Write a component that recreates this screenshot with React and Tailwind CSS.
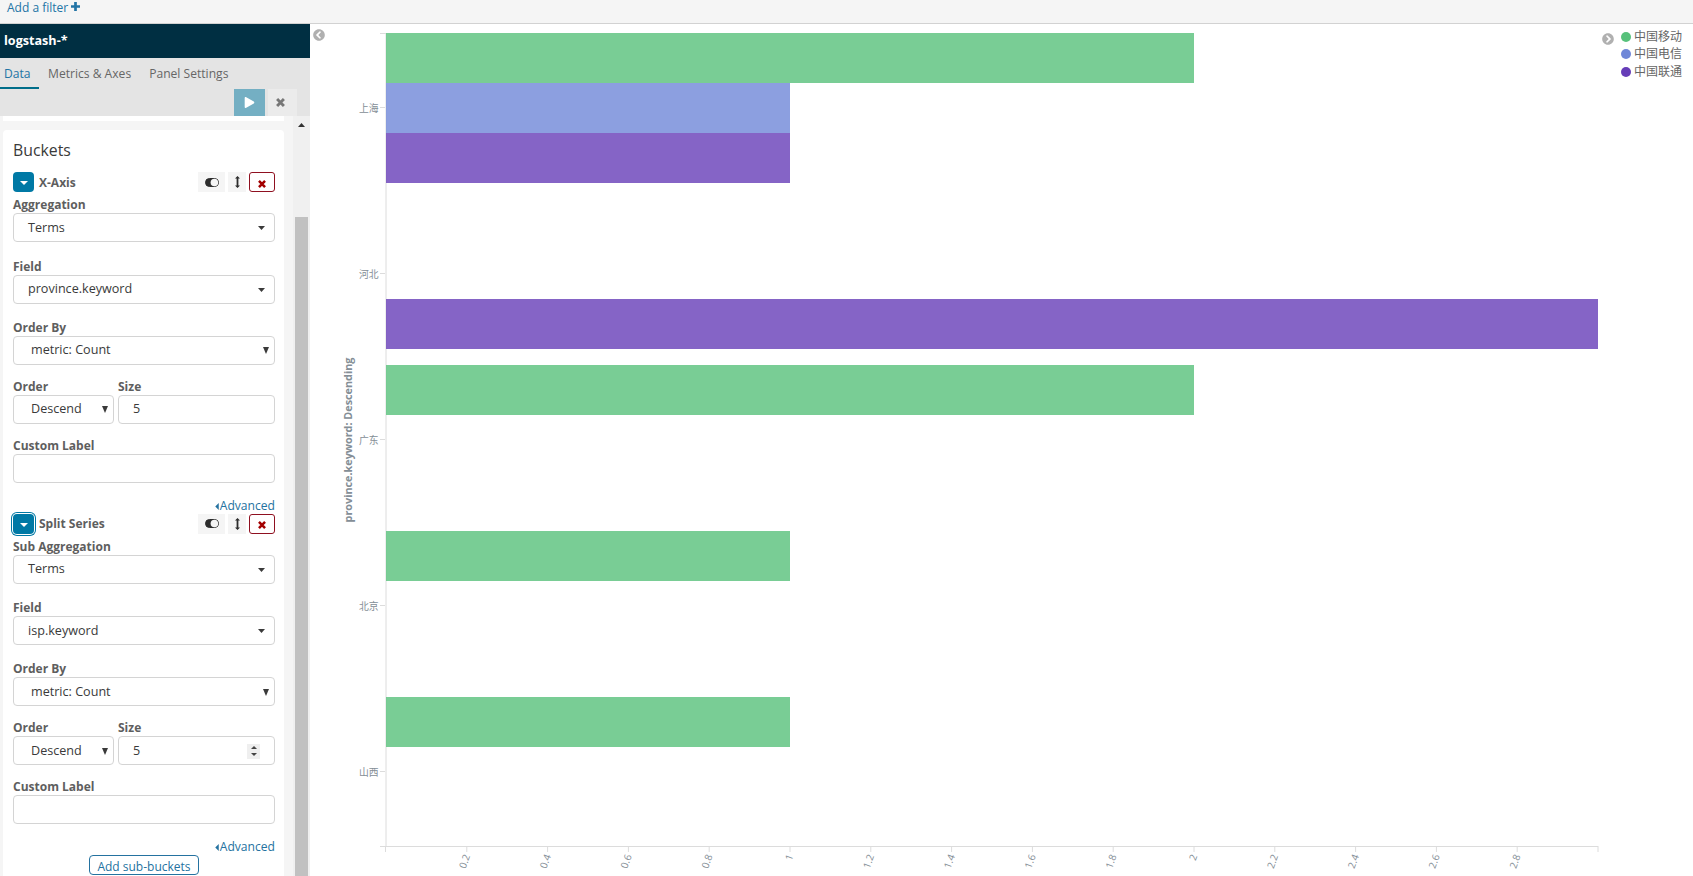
import { FaPlay, FaChevronCircleLeft, FaChevronCircleRight } from "react-icons/fa";

const UNIT = 404;

const bars = [
  { y: 9, value: 2, color: "#57c17b" },
  { y: 59, value: 1, color: "#6f87d8" },
  { y: 109, value: 1, color: "#663db8" },
  { y: 275, value: 3, color: "#663db8" },
  { y: 341, value: 2, color: "#57c17b" },
  { y: 507, value: 1, color: "#57c17b" },
  { y: 673, value: 1, color: "#57c17b" },
];

const provinces = ["上海", "河北", "广东", "北京", "山西"];
const ticks = ["0.2", "0.4", "0.6", "0.8", "1", "1.2", "1.4", "1.6", "1.8", "2", "2.2", "2.4", "2.6", "2.8"];

const legend = [
  { label: "中国移动", dot: "bg-[#57c17b]" },
  { label: "中国电信", dot: "bg-[#6f87d8]" },
  { label: "中国联通", dot: "bg-[#663db8]" },
];

function Triangle({ className }) {
  return (
    <svg viewBox="0 0 8 5" preserveAspectRatio="none" className={className} fill="currentColor">
      <path d="M0 0h8L4 5z" />
    </svg>
  );
}

function Cross({ className }) {
  return (
    <svg viewBox="0 0 10 10" className={className} stroke="currentColor" strokeWidth="3.2">
      <path d="M1.2 1.2l7.6 7.6M8.8 1.2L1.2 8.8" />
    </svg>
  );
}

function Field({ label, className = "", children }) {
  return (
    <div className={className}>
      <div className="h-[18px] text-[12px] leading-[20px] font-bold text-[#5e5e5e] whitespace-nowrap">{label}</div>
      {children}
    </div>
  );
}

function Box({ children, className = "" }) {
  return (
    <div className={`flex h-[29px] items-center justify-between rounded-[4px] border border-[#d4d4d4] bg-white pt-px text-[12.6px] text-[#3a3a3a] ${className}`}>
      {children}
    </div>
  );
}

function BucketHeader({ title, focused }) {
  return (
    <div className="flex h-[20px] items-center">
      <button className={`flex h-[20px] w-[21px] items-center justify-center rounded-[4px] bg-[#0079a5] text-white ${focused ? "ring-1 ring-[#0079a5] ring-offset-1" : ""}`}>
        <Triangle className="mt-0.5 h-[4px] w-[8px]" />
      </button>
      <span className="mt-px ml-[5px] text-[12px] font-bold text-[#5e5e5e]">{title}</span>
      <div className="ml-auto flex h-[20px]">
        <span className="flex w-[27px] items-center justify-center bg-[#f5f5f5]">
          <svg viewBox="0 0 14 9" className="h-[9px] w-[14px]">
            <rect x="0.5" y="0.5" width="13" height="8" rx="4" fill="#2d2d2d" stroke="#2d2d2d" />
            <circle cx="9.4" cy="4.5" r="3.8" fill="#f5f5f5" />
          </svg>
        </span>
        <span className="ml-[3px] flex w-[18px] items-center justify-center bg-[#f5f5f5]">
          <svg viewBox="0 0 5 12" className="h-[12px] w-[5px]" fill="#2d2d2d">
            <path d="M2.5 0 5 2.6H3.4v6.8H5L2.5 12 0 9.4h1.6V2.6H0z" />
          </svg>
        </span>
        <span className="ml-[3px] flex w-[26px] items-center justify-center rounded-[3px] border border-[#8f1020] bg-white text-[#a30000]">
          <Cross className="mt-[3px] size-[8px]" />
        </span>
      </div>
    </div>
  );
}

function Bucket({ title, focused, aggLabel, field, spinner }) {
  return (
    <div className="h-[341.5px]">
      <BucketHeader title={title} focused={focused} />
      <Field label={aggLabel} className="mt-[3px]">
        <Box className="pr-[9px] pl-[14px]">
          Terms
          <Triangle className="h-[4px] w-[7px]" />
        </Box>
      </Field>
      <Field label="Field" className="mt-[14.5px]">
        <Box className="pr-[9px] pl-[14px]">
          {field}
          <Triangle className="h-[4px] w-[7px]" />
        </Box>
      </Field>
      <Field label="Order By" className="mt-[14px]">
        <Box className="pr-[5px] pl-[17px]">
          metric: Count
          <Triangle className="h-[7px] w-[6px]" />
        </Box>
      </Field>
      <div className="mt-[12px] flex gap-[4px]">
        <Field label="Order" className="w-[101px]">
          <Box className="pr-[5px] pl-[17px]">
            Descend
            <Triangle className="h-[7px] w-[6px]" />
          </Box>
        </Field>
        <Field label="Size" className="flex-1">
          <Box className="pr-[14px] pl-[14px]">
            5
            {spinner && (
              <span className="flex h-[15px] w-[13px] flex-col items-center justify-center gap-[4px] bg-[#efefef] text-[#444]">
                <Triangle className="h-[3px] w-[6px] rotate-180" />
                <Triangle className="h-[3px] w-[6px]" />
              </span>
            )}
          </Box>
        </Field>
      </div>
      <Field label="Custom Label" className="mt-[12px]">
        <Box />
      </Field>
      <div className="mt-[13.5px] flex h-[20px] items-center justify-end gap-px text-[12.1px] text-[#2472a0]">
        <svg viewBox="0 0 4 8" className="h-[7px] w-[4px]" fill="currentColor">
          <path d="M4 0v8L0 4z" />
        </svg>
        <span>Advanced</span>
      </div>
    </div>
  );
}

function Sidebar() {
  return (
    <aside className="flex w-[310px] shrink-0 flex-col bg-[#f5f5f5]">
      <div className="flex h-[34px] shrink-0 items-center bg-[#002f42] pl-[4px] text-[12.6px] font-bold text-white">logstash-*</div>
      <div className="h-[58px] shrink-0 bg-[#e4e4e4]">
        <div className="flex h-[31px] text-[12.1px] text-[#666]">
          <div className="w-[39px] border-b-2 border-[#006e8a] pl-[4px] leading-[31px] text-[#2374a5]">Data</div>
          <div className="ml-[9px] leading-[31px]">Metrics &amp; Axes</div>
          <div className="ml-[18px] leading-[31px]">Panel Settings</div>
        </div>
        <div className="flex h-[27px] justify-end gap-[3px] pr-[13px]">
          <button className="flex w-[31px] items-center justify-center bg-[#74afc3] text-white">
            <FaPlay className="size-[11px]" />
          </button>
          <button className="flex w-[29px] items-center justify-center bg-[#ebebeb] pr-[4px] pb-px text-[#777]">
            <Cross className="size-[9px]" />
          </button>
        </div>
      </div>
      <div className="flex min-h-0 flex-1">
        <div className="ml-[3px] w-[281px]">
          <div className="h-[5px] bg-white" />
          <div className="mt-[9px] h-[746px] overflow-hidden rounded-t-[4px] bg-white pr-[9px] pl-[10px]">
            <div className="h-[42px] pt-[8px] text-[15.8px] leading-[24px] text-[#3a3a3a]">Buckets</div>
            <Bucket title="X-Axis" aggLabel="Aggregation" field="province.keyword" />
            <Bucket title="Split Series" aggLabel="Sub Aggregation" field="isp.keyword" focused spinner />
            <div className="flex justify-center">
              <button className="h-[20px] w-[110px] rounded-[4px] border border-[#2472a0] text-[12px] leading-[22px] text-[#2472a0]">
                Add sub-buckets
              </button>
            </div>
          </div>
        </div>
        <div className="ml-[9px] flex w-[17px] flex-col items-center bg-[#f0f0f0]">
          <Triangle className="mt-[7px] h-[4px] w-[7px] rotate-180 text-[#333]" />
          <div className="mt-[90px] mr-px w-[13px] flex-1 bg-[#c1c1c1]" />
        </div>
      </div>
    </aside>
  );
}

function Chart() {
  return (
    <svg width="1270" height="852" viewBox="0 0 1270 852" className="shrink-0 font-['Open_Sans','Noto_Sans_CJK_SC',sans-serif]">
      <text transform="translate(21.5 416) rotate(-90)" textAnchor="middle" className="fill-[#848e96] text-[10.8px] font-bold">
        province.keyword: Descending
      </text>
      <g className="stroke-[#dcdcdc]" fill="none">
        <path d="M50 9.5h6V822.5M50 822.5h1218" />
        <path d="M55.5 822v6M1268 822v6" />
        {provinces.map((name, i) => (
          <path key={name} d={`M50 ${83.5 + i * 166}h5`} />
        ))}
        {ticks.map((tick) => (
          <path key={tick} d={`M${56 + tick * UNIT} 822v6`} />
        ))}
      </g>
      {bars.map((bar) => (
        <rect key={bar.y} x="56" y={bar.y} width={bar.value * UNIT} height="50" fill={bar.color} opacity="0.8" />
      ))}
      {provinces.map((name, i) => (
        <text key={name} x="48.5" y={87.5 + i * 166} textAnchor="end" className="fill-[#848e96] text-[9.8px]">{name}</text>
      ))}
      {ticks.map((tick) => (
        <text
          key={tick}
          transform={`translate(${59.5 + tick * UNIT} 832) rotate(-70)`}
          textAnchor="end"
          className="fill-[#848e96] text-[10px]"
        >
          {tick}
        </text>
      ))}
    </svg>
  );
}

export default function App() {
  return (
    <div className="flex h-[876px] w-[1693px] flex-col overflow-hidden bg-white font-['Open_Sans','Noto_Sans_CJK_SC',sans-serif]">
      <div className="flex h-[24px] shrink-0 gap-[3px] border-b border-[#d2d2d2] bg-[#f5f5f5] pl-[7px] text-[12px] leading-[15px] text-[#2374a5]">
        Add a filter
        <svg viewBox="0 0 10 10" className="mt-[2px] size-[9px]" stroke="currentColor" strokeWidth="3">
          <path d="M5 0v10M0 5h10" />
        </svg>
      </div>
      <div className="flex min-h-0 flex-1">
        <Sidebar />
        <div className="w-[20px] shrink-0 pt-[5px] pl-[3px]">
          <FaChevronCircleLeft className="size-[12px] text-[#b0b0b0]" />
        </div>
        <Chart />
        <div className="flex shrink-0 pt-[9px] pl-[2px]">
          <FaChevronCircleRight className="size-[12px] text-[#b0b0b0]" />
          <ul className="ml-[7px] -mt-[5px]">
            {legend.map((item) => (
              <li key={item.label} className="flex h-[17.5px] items-center gap-[3px] text-[12px] whitespace-nowrap text-[#666]">
                <span className={`size-[10px] rounded-full ${item.dot}`} />
                {item.label}
              </li>
            ))}
          </ul>
        </div>
      </div>
    </div>
  );
}
